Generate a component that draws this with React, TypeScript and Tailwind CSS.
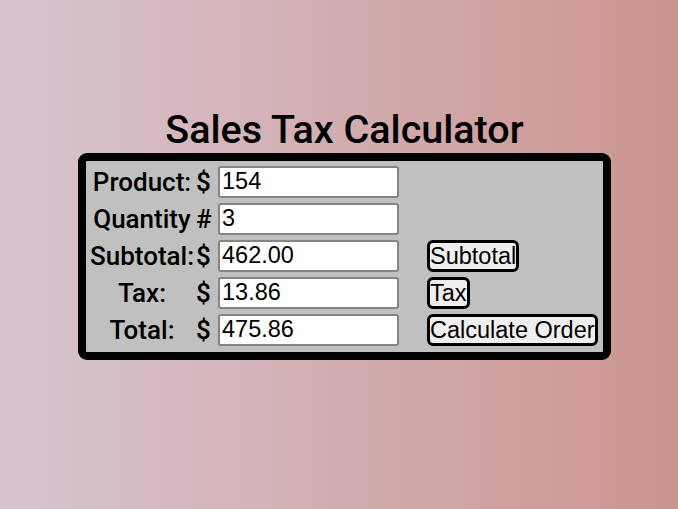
import React from 'react'

const rows = [
  { label: 'Product:', sym: '$', value: '154', button: '' },
  { label: 'Quantity', sym: '#', value: '3', button: '' },
  { label: 'Subtotal:', sym: '$', value: '462.00', button: 'Subtotal' },
  { label: 'Tax:', sym: '$', value: '13.86', button: 'Tax' },
  { label: 'Total:', sym: '$', value: '475.86', button: 'Calculate Order' },
]

export default function App() {
  return (
    <div className="min-h-[509px] w-full bg-gradient-to-r from-[#d6c6d1] to-[#cc948f] pt-[106px] pl-[11px] font-['Roboto',sans-serif] text-black">
      <h1 className="text-center text-[39.5px] font-medium leading-[47px]">Sales Tax Calculator</h1>
      <div className="mx-auto w-[533px] rounded-[9px] border-[8px] border-black bg-[#c0c0c0] pt-[2px] pb-[4px]">
        {rows.map((r) => (
          <div key={r.label} className="grid h-[37px] grid-cols-[109px_23px_181px_1fr] items-center">
            <span className="pl-[3px] text-center text-[26px] font-medium leading-none">{r.label}</span>
            <span className="pl-[1px] text-[26px] font-medium leading-none">{r.sym}</span>
            <input
              readOnly
              value={r.value}
              className="h-[32px] w-[181px] rounded-[3px] border-2 border-[#858585] bg-white px-[2px] font-['Liberation_Sans',Arial,sans-serif] text-[23.5px] text-black outline-none"
            />
            <div className="pl-[28px]">
              {r.button && (
                <button className="h-[32px] rounded-[6px] border-[3px] border-black bg-[#efefef] px-0 font-['Liberation_Sans',Arial,sans-serif] text-[23.5px] leading-[26px] whitespace-nowrap">
                  {r.button}
                </button>
              )}
            </div>
          </div>
        ))}
      </div>
    </div>
  )
}
